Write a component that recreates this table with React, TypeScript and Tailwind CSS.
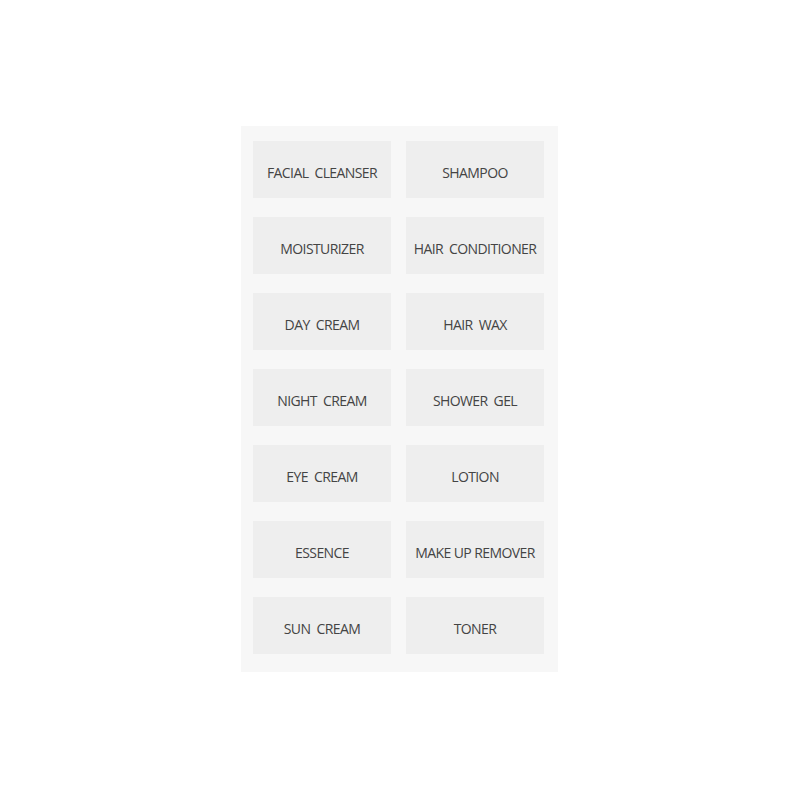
const items = [
  "FACIAL  CLEANSER",
  "SHAMPOO",
  "MOISTURIZER",
  "HAIR  CONDITIONER",
  "DAY  CREAM",
  "HAIR  WAX",
  "NIGHT  CREAM",
  "SHOWER  GEL",
  "EYE  CREAM",
  "LOTION",
  "ESSENCE",
  "MAKE UP REMOVER",
  "SUN  CREAM",
  "TONER",
];

export default function App() {
  return (
    <div className="min-h-screen bg-white pt-[126px] pl-[241px]">
      <div className="w-[317px] bg-[#f7f7f7] pt-[15px] pb-[18px] pl-[12px] pr-[14px]">
        <div className="grid grid-cols-[138px_138px] gap-x-[15px] gap-y-[19px]">
          {items.map((label) => (
            <div
              key={label}
              className="h-[57px] bg-[#eeeeee] flex items-center justify-center pt-[5px] whitespace-pre text-[14px] text-[#444] font-['Open_Sans',sans-serif] tracking-[-0.6px]"
            >
              {label}
            </div>
          ))}
        </div>
      </div>
    </div>
  );
}
